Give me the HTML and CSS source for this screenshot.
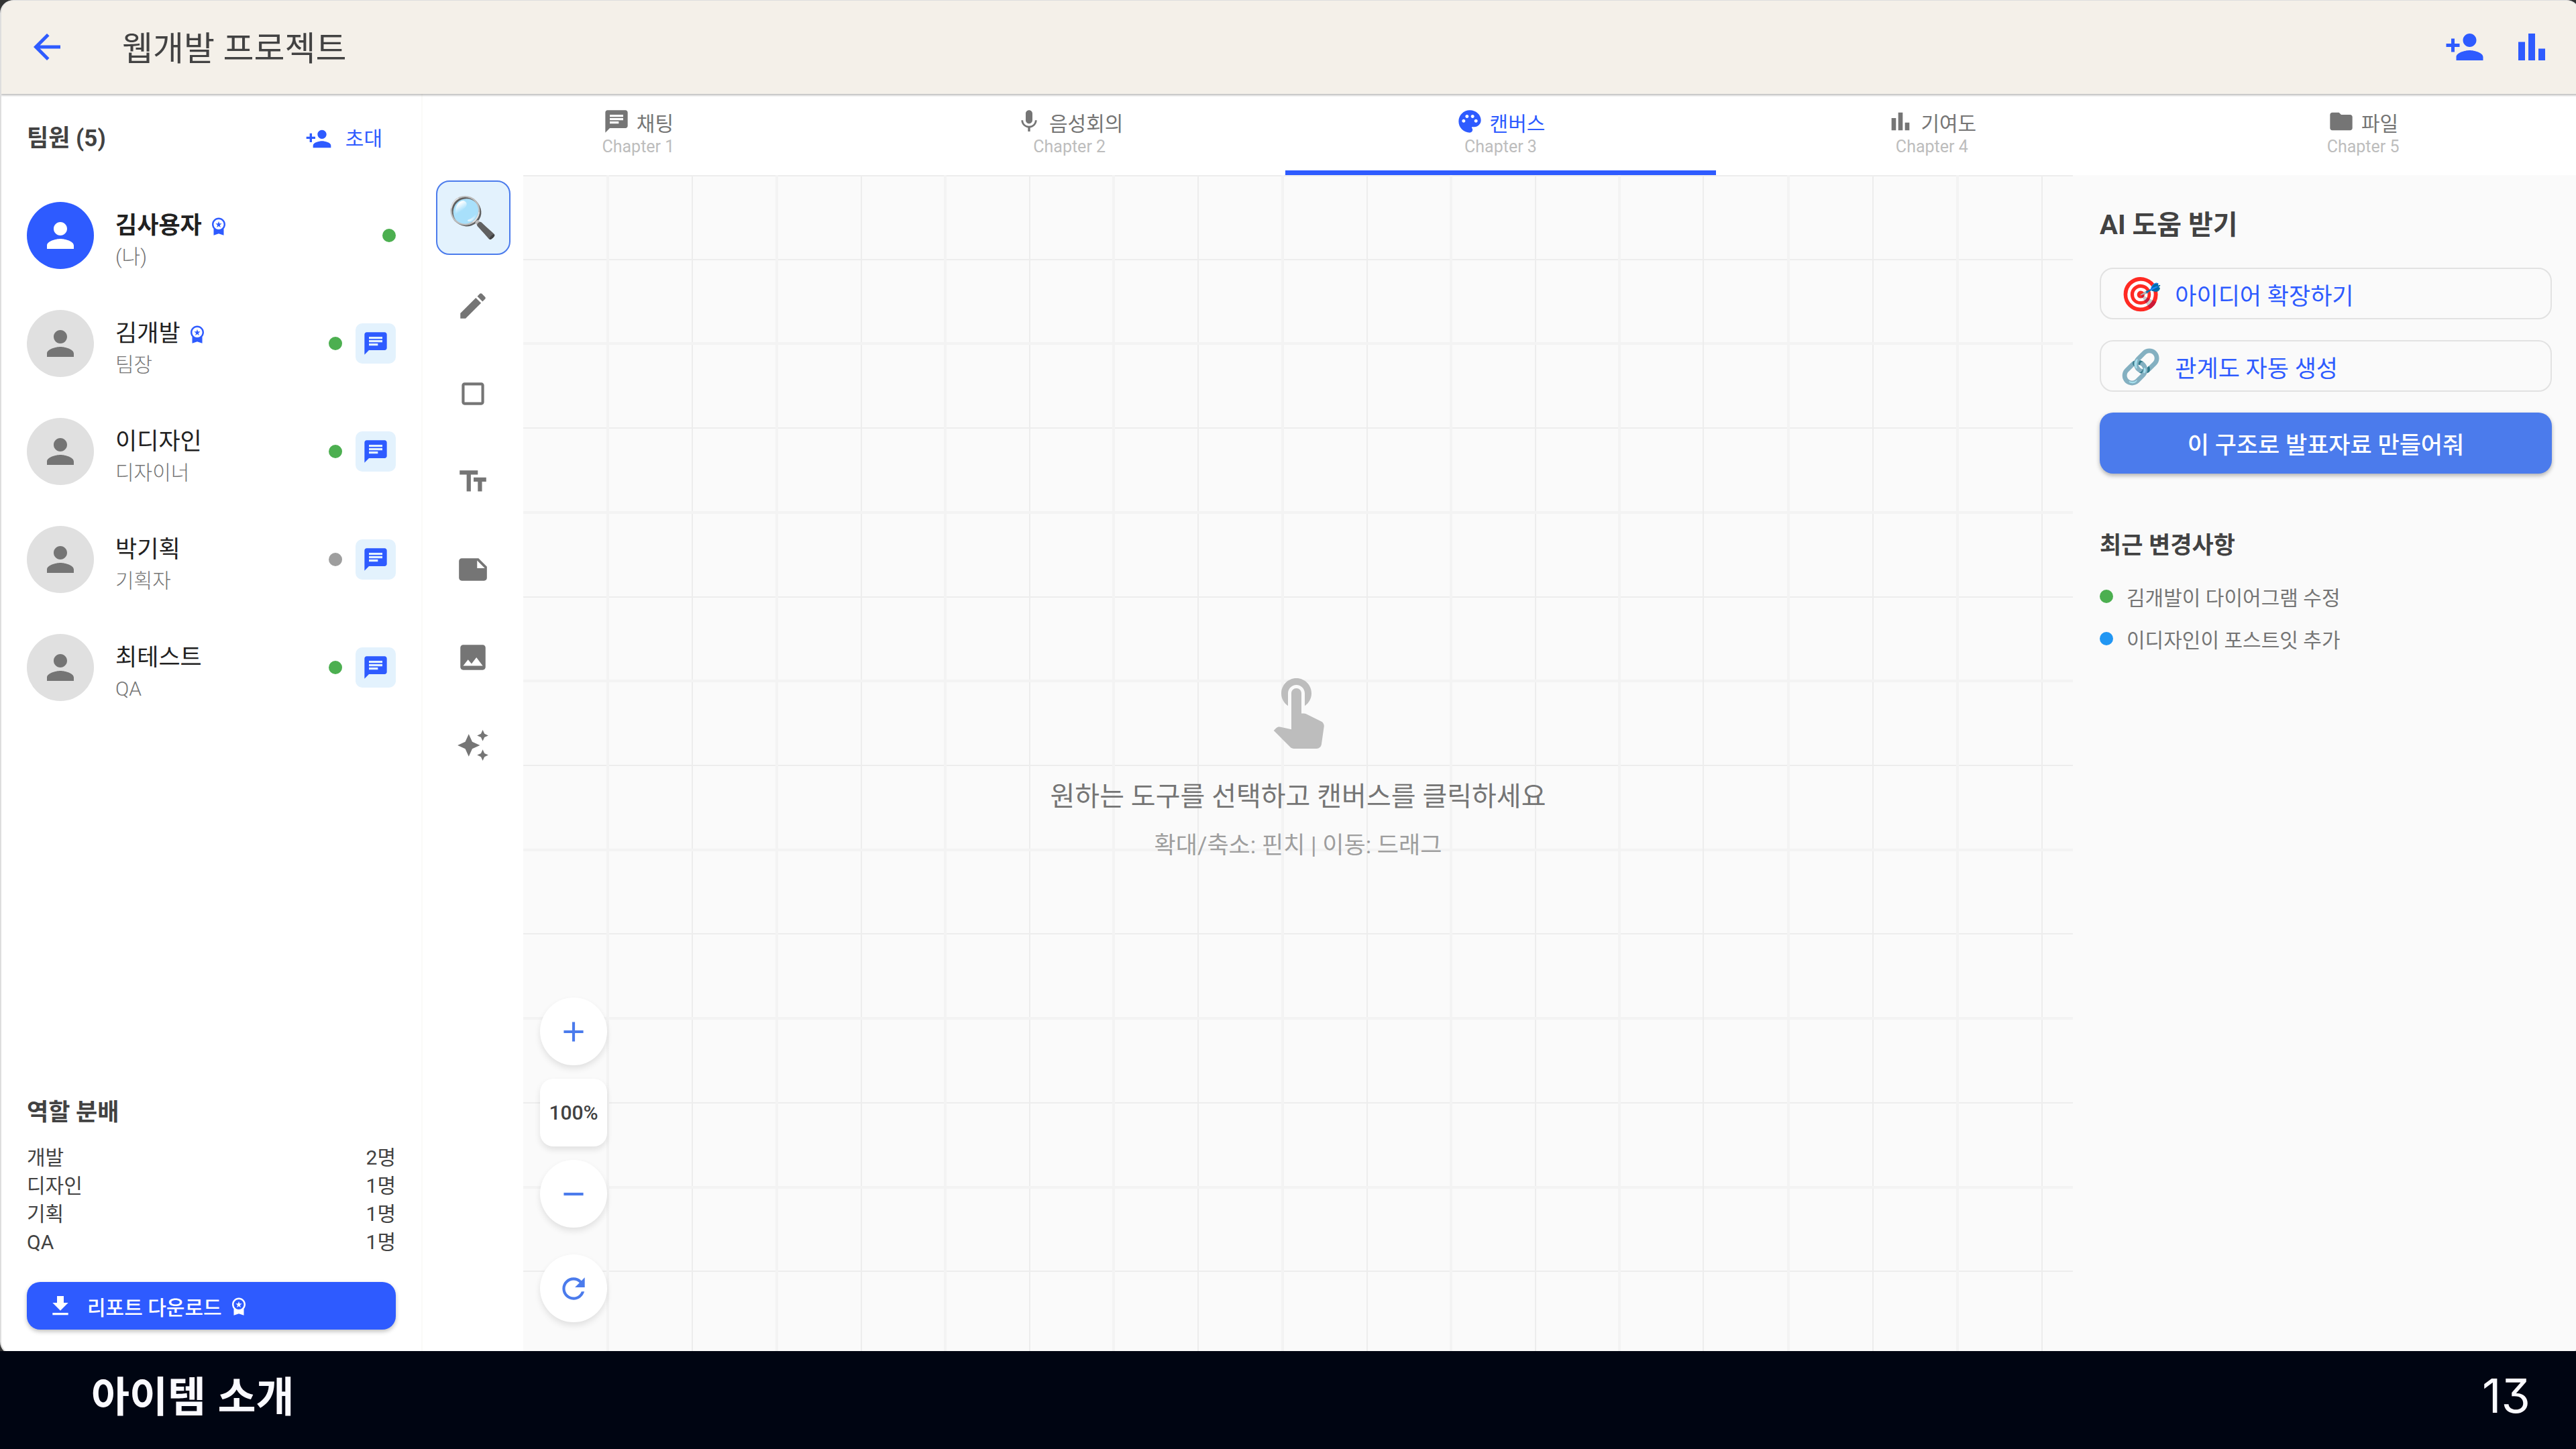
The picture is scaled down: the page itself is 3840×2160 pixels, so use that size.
FILE: index.html
```html
<!DOCTYPE html>
<html lang="ko">
<head>
<meta charset="utf-8">
<meta name="viewport" content="width=device-width, initial-scale=1">
<title>웹개발 프로젝트</title>
<link rel="stylesheet" href="styles.css">
</head>
<body>
<svg class="sprite" aria-hidden="true">
  <symbol id="i-back" viewBox="0 0 24 24"><path d="M20 11H7.83l5.59-5.59L12 4l-8 8 8 8 1.41-1.41L7.83 13H20v-2z"/></symbol>
  <symbol id="i-person" viewBox="0 0 24 24"><path d="M12 12c2.21 0 4-1.79 4-4s-1.79-4-4-4-4 1.79-4 4 1.79 4 4 4zm0 2c-2.67 0-8 1.34-8 4v2h16v-2c0-2.66-5.33-4-8-4z"/></symbol>
  <symbol id="i-person-add" viewBox="0 0 24 24"><path d="M15 12c2.21 0 4-1.79 4-4s-1.79-4-4-4-4 1.79-4 4 1.79 4 4 4zm-9-2V7H4v3H1v2h3v3h2v-3h3v-2H6zm9 4c-2.67 0-8 1.34-8 4v2h16v-2c0-2.66-5.33-4-8-4z"/></symbol>
  <symbol id="i-bars" viewBox="0 0 24 24"><path d="M4 9h4v11H4zM16 13h4v7h-4zM10 4h4v16h-4z"/></symbol>
  <symbol id="i-badge" viewBox="0 0 24 24"><path d="M9.68 13.69 12 11.93l2.31 1.76-.88-2.85L15.75 9h-2.84L12 6.19 11.09 9H8.25l2.31 1.84-.88 2.85zM20 10c0-4.42-3.58-8-8-8s-8 3.58-8 8c0 2.03.76 3.87 2 5.28V23l6-2 6 2v-7.72c1.24-1.41 2-3.25 2-5.28zm-8-6c3.31 0 6 2.69 6 6s-2.69 6-6 6-6-2.69-6-6 2.69-6 6-6z"/></symbol>
  <symbol id="i-chat" viewBox="0 0 24 24"><path d="M20 2H4c-1.1 0-1.99.9-1.99 2L2 22l4-4h14c1.1 0 2-.9 2-2V4c0-1.1-.9-2-2-2zM6 9h12v2H6V9zm8 5H6v-2h8v2zm4-6H6V6h12v2z"/></symbol>
  <symbol id="i-mic" viewBox="0 0 24 24"><path d="M12 14c1.66 0 2.99-1.34 2.99-3L15 5c0-1.66-1.34-3-3-3S9 3.34 9 5v6c0 1.66 1.34 3 3 3zm5.3-3c0 3-2.54 5.1-5.3 5.1S6.7 14 6.7 11H5c0 3.41 2.72 6.23 6 6.72V21h2v-3.28c3.28-.48 6-3.3 6-6.72h-1.7z"/></symbol>
  <symbol id="i-palette" viewBox="0 0 24 24"><path d="M12 2C6.49 2 2 6.49 2 12s4.49 10 10 10c1.38 0 2.5-1.12 2.5-2.5 0-.61-.23-1.2-.64-1.67-.08-.1-.13-.21-.13-.33 0-.28.22-.5.5-.5H16c3.31 0 6-2.69 6-6 0-4.96-4.49-9-10-9zm5.5 11c-.83 0-1.5-.67-1.5-1.5s.67-1.5 1.5-1.5 1.5.67 1.5 1.5-.67 1.5-1.5 1.5zm-3-4c-.83 0-1.5-.67-1.5-1.5S13.67 6 14.5 6s1.5.67 1.5 1.5S15.33 9 14.5 9zM5 11.5c0-.83.67-1.5 1.5-1.5s1.5.67 1.5 1.5S7.33 13 6.5 13 5 12.33 5 11.5zm6-4c0 .83-.67 1.5-1.5 1.5S8 8.33 8 7.5 8.67 6 9.5 6s1.5.67 1.5 1.5z"/></symbol>
  <symbol id="i-folder" viewBox="0 0 24 24"><path d="M10 4H4c-1.1 0-1.99.9-1.99 2L2 18c0 1.1.9 2 2 2h16c1.1 0 2-.9 2-2V8c0-1.1-.9-2-2-2h-8l-2-2z"/></symbol>
  <symbol id="i-edit" viewBox="0 0 24 24"><path d="M3 17.25V21h3.75L17.81 9.94l-3.75-3.75L3 17.25zM20.71 7.04c.39-.39.39-1.02 0-1.41l-2.34-2.34c-.39-.39-1.02-.39-1.41 0l-1.83 1.83 3.75 3.75 1.83-1.83z"/></symbol>
  <symbol id="i-square" viewBox="0 0 24 24"><path d="M18 4H6c-1.1 0-2 .9-2 2v12c0 1.1.9 2 2 2h12c1.1 0 2-.9 2-2V6c0-1.1-.9-2-2-2zm0 14H6V6h12v12z"/></symbol>
  <symbol id="i-text" viewBox="0 0 24 24"><path d="M2.5 4v3h5v12h3V7h5V4h-13zm19 5h-9v3h3v7h3v-7h3V9z"/></symbol>
  <symbol id="i-note" viewBox="0 0 24 24"><path d="M22 10l-6-6H4c-1.1 0-2 .9-2 2v12.01c0 1.1.9 1.99 2 1.99l16-.01c1.1 0 2-.89 2-2v-8zm-7-4.5l5.5 5.5H15V5.5z"/></symbol>
  <symbol id="i-image" viewBox="0 0 24 24"><path d="M21 19V5c0-1.1-.9-2-2-2H5c-1.1 0-2 .9-2 2v14c0 1.1.9 2 2 2h14c1.1 0 2-.9 2-2zM8.5 13.5l2.5 3.01L14.5 12l4.5 6H5l3.5-4.5z"/></symbol>
  <symbol id="i-sparkle" viewBox="0 0 24 24"><path d="M19 9l1.25-2.75L23 5l-2.75-1.25L19 1l-1.25 2.75L15 5l2.75 1.25L19 9zm-7.5.5L9 4 6.5 9.5 1 12l5.5 2.5L9 20l2.5-5.5L17 12l-5.5-2.5zM19 15l-1.25 2.75L15 19l2.75 1.25L19 23l1.25-2.75L23 19l-2.75-1.25L19 15z"/></symbol>
  <symbol id="i-touch" viewBox="0 0 24 24"><path d="M9 11.24V7.5C9 6.12 10.12 5 11.5 5S14 6.12 14 7.5v3.74c1.21-.81 2-2.18 2-3.74C16 5.01 13.99 3 11.5 3S7 5.01 7 7.5c0 1.56.79 2.93 2 3.74zm9.84 4.63l-4.54-2.26c-.17-.07-.35-.11-.54-.11H13v-6c0-.83-.67-1.5-1.5-1.5S10 6.67 10 7.5v10.74l-3.43-.72c-.08-.01-.15-.03-.24-.03-.31 0-.59.13-.79.33l-.79.8 4.94 4.94c.27.27.65.44 1.06.44h6.79c.75 0 1.33-.55 1.44-1.28l.75-5.27c.01-.07.02-.14.02-.2 0-.62-.38-1.16-.91-1.38z"/></symbol>
  <symbol id="i-plus" viewBox="0 0 24 24"><path d="M19 13h-6v6h-2v-6H5v-2h6V5h2v6h6v2z"/></symbol>
  <symbol id="i-minus" viewBox="0 0 24 24"><path d="M19 13H5v-2h14v2z"/></symbol>
  <symbol id="i-refresh" viewBox="0 0 24 24"><path d="M17.65 6.35C16.2 4.9 14.21 4 12 4c-4.42 0-7.99 3.58-7.99 8s3.57 8 7.99 8c3.73 0 6.84-2.55 7.73-6h-2.08c-.82 2.33-3.04 4-5.65 4-3.31 0-6-2.69-6-6s2.69-6 6-6c1.66 0 3.14.69 4.22 1.78L13 11h7V4l-2.35 2.35z"/></symbol>
  <symbol id="i-download" viewBox="0 0 24 24"><path d="M19 9h-4V3H9v6H5l7 7 7-7zM5 18v2h14v-2H5z"/></symbol>
</svg>

<div class="stage">
  <div class="app">
    <header class="appbar">
      <button class="icon-btn" aria-label="뒤로"><svg class="icon icon-60"><use href="#i-back"/></svg></button>
      <h1 class="appbar-title">웹개발 프로젝트</h1>
      <div class="appbar-actions">
        <button class="icon-btn" aria-label="팀원 초대"><svg class="icon icon-60"><use href="#i-person-add"/></svg></button>
        <button class="icon-btn" aria-label="통계"><svg class="icon icon-60"><use href="#i-bars"/></svg></button>
      </div>
    </header>

    <div class="workspace">
      <aside class="sidebar">
        <div class="team-head">
          <h2 class="section-title">팀원 (5)</h2>
          <button class="invite"><svg class="icon icon-40"><use href="#i-person-add"/></svg>초대</button>
        </div>
        <ul class="members">
          <li class="member">
            <span class="avatar avatar-me"><svg class="icon icon-60"><use href="#i-person"/></svg></span>
            <div class="who"><div class="name name-me">김사용자<svg class="icon icon-30"><use href="#i-badge"/></svg></div><div class="role">(나)</div></div>
            <span class="dot dot-green"></span>
          </li>
          <li class="member">
            <span class="avatar"><svg class="icon icon-60"><use href="#i-person"/></svg></span>
            <div class="who"><div class="name">김개발<svg class="icon icon-30"><use href="#i-badge"/></svg></div><div class="role">팀장</div></div>
            <span class="dot dot-green"></span>
            <button class="dm" aria-label="김개발에게 메시지"><svg class="icon icon-40"><use href="#i-chat"/></svg></button>
          </li>
          <li class="member">
            <span class="avatar"><svg class="icon icon-60"><use href="#i-person"/></svg></span>
            <div class="who"><div class="name">이디자인</div><div class="role">디자이너</div></div>
            <span class="dot dot-green"></span>
            <button class="dm" aria-label="이디자인에게 메시지"><svg class="icon icon-40"><use href="#i-chat"/></svg></button>
          </li>
          <li class="member">
            <span class="avatar"><svg class="icon icon-60"><use href="#i-person"/></svg></span>
            <div class="who"><div class="name">박기획</div><div class="role">기획자</div></div>
            <span class="dot dot-gray"></span>
            <button class="dm" aria-label="박기획에게 메시지"><svg class="icon icon-40"><use href="#i-chat"/></svg></button>
          </li>
          <li class="member">
            <span class="avatar"><svg class="icon icon-60"><use href="#i-person"/></svg></span>
            <div class="who"><div class="name">최테스트</div><div class="role">QA</div></div>
            <span class="dot dot-green"></span>
            <button class="dm" aria-label="최테스트에게 메시지"><svg class="icon icon-40"><use href="#i-chat"/></svg></button>
          </li>
        </ul>
        <div class="roles">
          <h2 class="section-title">역할 분배</h2>
          <table class="role-table">
            <tr><th scope="row">개발</th><td>2명</td></tr>
            <tr><th scope="row">디자인</th><td>1명</td></tr>
            <tr><th scope="row">기획</th><td>1명</td></tr>
            <tr><th scope="row">QA</th><td>1명</td></tr>
          </table>
          <button class="download"><svg class="icon icon-40"><use href="#i-download"/></svg><span class="download-label">리포트 다운로드<svg class="icon icon-30"><use href="#i-badge"/></svg></span></button>
        </div>
      </aside>

      <main class="main">
        <nav class="tabs">
          <a class="tab" href="#chat"><span class="tab-label"><svg class="icon icon-40"><use href="#i-chat"/></svg><span class="tab-name">채팅</span></span><span class="tab-sub">Chapter 1</span></a>
          <a class="tab" href="#voice"><span class="tab-label"><svg class="icon icon-40"><use href="#i-mic"/></svg><span class="tab-name">음성회의</span></span><span class="tab-sub">Chapter 2</span></a>
          <a class="tab tab-active" href="#canvas" aria-current="page"><span class="tab-label"><svg class="icon icon-40"><use href="#i-palette"/></svg><span class="tab-name">캔버스</span></span><span class="tab-sub">Chapter 3</span></a>
          <a class="tab" href="#stats"><span class="tab-label"><svg class="icon icon-40"><use href="#i-bars"/></svg><span class="tab-name">기여도</span></span><span class="tab-sub">Chapter 4</span></a>
          <a class="tab" href="#files"><span class="tab-label"><svg class="icon icon-40"><use href="#i-folder"/></svg><span class="tab-name">파일</span></span><span class="tab-sub">Chapter 5</span></a>
        </nav>

        <div class="board">
          <div class="tools">
            <button class="tool tool-active" aria-label="선택"><span class="emoji-60">🔍</span></button>
            <button class="tool" aria-label="펜"><svg class="icon icon-50"><use href="#i-edit"/></svg></button>
            <button class="tool" aria-label="도형"><svg class="icon icon-50"><use href="#i-square"/></svg></button>
            <button class="tool" aria-label="텍스트"><svg class="icon icon-50"><use href="#i-text"/></svg></button>
            <button class="tool" aria-label="메모"><svg class="icon icon-50"><use href="#i-note"/></svg></button>
            <button class="tool" aria-label="이미지"><svg class="icon icon-50"><use href="#i-image"/></svg></button>
            <button class="tool" aria-label="AI"><svg class="icon icon-50"><use href="#i-sparkle"/></svg></button>
          </div>

          <section class="canvas" id="canvas">
            <svg class="grid-lines" aria-hidden="true">
              <defs>
                <pattern id="grid" width="1760" height="1760" patternUnits="userSpaceOnUse">
                  <path stroke="#ededed" stroke-width="2" d="M252 0v1760M504 0v1760M755 0v1760M1006 0v1760M1258 0v1760M1509 0v1760M0 1h1760M0 126h1760M0 377h1760M0 629h1760M0 880h1760M0 1131h1760M0 1383h1760M0 1634h1760"/>
                  <path stroke="#f3f3f3" stroke-width="4" d="M126 0v1760M378 0v1760M629 0v1760M880 0v1760M1132 0v1760M1383 0v1760M1634 0v1760M0 251h1760M0 503h1760M0 754h1760M0 1006h1760M0 1257h1760M0 1509h1760"/>
                  <path stroke="#ededed" stroke-width="2" d="M1759 0v1760"/>
                </pattern>
              </defs>
              <rect width="100%" height="100%" fill="url(#grid)"/>
            </svg>
            <div class="hint">
              <svg class="icon icon-120"><use href="#i-touch"/></svg>
              <p class="hint-main">원하는 도구를 선택하고 캔버스를 클릭하세요</p>
              <p class="hint-sub">확대/축소: 핀치 | 이동: 드래그</p>
            </div>
            <div class="zoom">
              <button class="zoom-btn" aria-label="확대"><svg class="icon icon-50"><use href="#i-plus"/></svg></button>
              <output class="zoom-value">100%</output>
              <button class="zoom-btn" aria-label="축소"><svg class="icon icon-50"><use href="#i-minus"/></svg></button>
              <button class="zoom-btn zoom-reset" aria-label="초기화"><svg class="icon icon-50"><use href="#i-refresh"/></svg></button>
            </div>
          </section>

          <aside class="panel">
            <h2 class="panel-title">AI 도움 받기</h2>
            <button class="ai-btn"><span class="emoji-50">🎯</span>아이디어 확장하기</button>
            <button class="ai-btn"><span class="emoji-50">🔗</span>관계도 자동 생성</button>
            <button class="ai-primary">이 구조로 발표자료 만들어줘</button>
            <h3 class="section-title recent-title">최근 변경사항</h3>
            <ul class="recent">
              <li><span class="dot dot-green"></span>김개발이 다이어그램 수정</li>
              <li><span class="dot dot-blue"></span>이디자인이 포스트잇 추가</li>
            </ul>
          </aside>
        </div>
      </main>
    </div>
  </div>
</div>
<footer class="caption">
  <p class="caption-title">아이템 소개</p>
  <p class="caption-page">13</p>
</footer>
</body>
</html>
```
FILE: styles.css
```css
:root {
  --blue: #2e5bff;
  --canvas-blue: #4b7bec;
  --ink: #424242;
  --muted: #757575;
  --tint: #e3f2fd;
}
* { box-sizing: border-box; }
body {
  margin: 0;
  min-height: 100vh;
  display: flex;
  flex-direction: column;
  background: #000512;
  color: var(--ink);
  font-family: Roboto, "Noto Sans CJK KR", sans-serif;
  font-size: 30px;
}
h1, h2, h3, p, ul { margin: 0; padding: 0; }
ul { list-style: none; }
button {
  border: 0;
  padding: 0;
  background: none;
  color: inherit;
  font: inherit;
  display: flex;
  align-items: center;
  justify-content: center;
}
a { color: inherit; text-decoration: none; }
.sprite { position: absolute; width: 0; height: 0; }
.icon { display: block; flex: none; fill: currentColor; }
.icon-30 { width: 30px; height: 30px; }
.icon-40 { width: 40px; height: 40px; }
.icon-50 { width: 50px; height: 50px; }
.icon-60 { width: 60px; height: 60px; }
.icon-120 { width: 120px; height: 120px; }
.emoji-50, .emoji-60 { font-family: "Noto Color Emoji", sans-serif; font-weight: 400; }
.emoji-50 { font-size: 50px; line-height: 60px; }
.emoji-60 { font-size: 60px; line-height: 70px; }

/* window frame: runs slightly past the right and bottom edges */
.stage { flex: 1; display: flex; overflow: hidden; background: #333; }
.app {
  flex: 1;
  display: flex;
  flex-direction: column;
  margin: 0 -6px -6px 0;
  border: 2px solid #dedede;
  border-top-width: 1px;
  border-radius: 20px;
  overflow: hidden;
  background: #fff;
}

.appbar {
  position: relative;
  z-index: 1;
  display: flex;
  align-items: center;
  height: 139px;
  padding: 0 40px 2px 38px;
  background: #f4f0e9;
  box-shadow: 0 1px 3px 1px rgba(0, 0, 0, .28);
  color: var(--blue);
}
.appbar-title { margin-left: 82px; color: var(--ink); font-size: 50px; font-weight: 400; line-height: 60px; padding-top: 6px; }
.appbar-actions { display: flex; gap: 40px; margin-left: auto; }

.workspace { flex: 1; display: flex; }
.sidebar {
  flex: none;
  width: 628px;
  display: flex;
  flex-direction: column;
  padding: 37px 38px 36px;
  border-right: 2px solid #fafaf8;
}
.section-title { font-size: 35px; font-weight: 700; line-height: 60px; }
.team-head { display: flex; align-items: center; justify-content: space-between; }
.invite { gap: 20px; padding: 0 20px; color: var(--blue); line-height: 60px; }
.members { display: flex; flex-direction: column; gap: 61px; padding-top: 64px; }
.member { display: flex; align-items: center; height: 100px; }
.avatar {
  display: grid;
  place-items: center;
  width: 100px;
  height: 100px;
  border-radius: 50%;
  background: #e0e0e0;
  color: var(--muted);
}
.avatar-me { background: var(--blue); color: #fff; }
.who { flex: 1; padding: 18px 0 0 32px; }
.name { display: flex; align-items: center; gap: 10px; color: #212121; font-size: 35px; line-height: 46px; }
.name .icon { color: var(--blue); }
.name-me { font-weight: 700; }
.role { color: var(--muted); line-height: 46px; font-weight: 300; }
.dot { flex: none; width: 20px; height: 20px; border-radius: 50%; }
.dot-green { background: #4caf50; }
.dot-gray { background: #9e9e9e; }
.dot-blue { background: #2196f3; }
.dm { width: 60px; height: 60px; margin-left: 20px; border-radius: 10px; background: var(--tint); color: var(--blue); }

.roles { margin-top: auto; }
.role-table { width: 100%; margin: 16px 0 38px; border-collapse: collapse; line-height: 42px; }
.role-table th, .role-table td { padding: 0; font-weight: 400; text-align: left; }
.role-table td { text-align: right; }
.download {
  width: 100%;
  height: 71px;
  justify-content: flex-start;
  gap: 20px;
  padding: 0 30px;
  border-radius: 20px;
  background: var(--blue);
  color: #fff;
  font-weight: 500;
  box-shadow: 0 3px 6px rgba(0, 0, 0, .25);
}
.download-label { display: flex; align-items: center; gap: 10px; }

.main { flex: 1; display: flex; flex-direction: column; min-width: 0; }
.tabs { display: grid; grid-template-columns: repeat(5, 1fr); height: 121px; }
.tab { display: flex; flex-direction: column; align-items: center; padding-top: 21px; border-bottom: 7px solid transparent; color: var(--muted); }
.tab-active { border-bottom-color: var(--blue); color: var(--blue); }
.tab-label { display: flex; align-items: flex-start; gap: 10px; }
.tab-name { padding-top: 4px; line-height: 40px; }
.tab-sub { color: #bdbdbd; font-size: 25px; line-height: 28px; }

.board { flex: 1; display: flex; background: #fafafa; }
.tools { flex: none; width: 150px; display: flex; flex-direction: column; align-items: center; gap: 20px; padding-top: 8px; background: #fff; color: var(--muted); }
.tool { width: 111px; height: 111px; border-radius: 20px; }
.tool-active { border: 2px solid var(--canvas-blue); background: var(--tint); }

.canvas { position: relative; flex: 1; display: flex; align-items: center; justify-content: center; }
.grid-lines { position: absolute; inset: 0; width: 100%; height: 100%; }
.hint { position: relative; display: flex; flex-direction: column; align-items: center; text-align: center; color: #bdbdbd; }
.hint-main { margin: 42px 0 20px; color: var(--muted); font-size: 40px; line-height: 60px; }
.hint-sub { color: #9e9e9e; font-size: 35px; line-height: 46px; }
.zoom { position: absolute; left: 25px; bottom: 47px; display: flex; flex-direction: column; gap: 20px; }
.zoom-btn, .zoom-value {
  width: 100px;
  height: 101px;
  border-radius: 50%;
  background: #fff;
  color: var(--canvas-blue);
  box-shadow: 0 5px 10px rgba(0, 0, 0, .1);
}
.zoom-value { display: grid; place-items: center; border-radius: 20px; color: var(--ink); font-weight: 500; }
.zoom-reset { margin-top: 20px; }

.panel { flex: none; width: 754px; padding: 45px 40px 40px; }
.panel-title { margin-bottom: 33px; font-size: 40px; font-weight: 700; line-height: 60px; }
.ai-btn {
  width: 100%;
  height: 77px;
  justify-content: flex-start;
  gap: 20px;
  margin-bottom: 31px;
  padding: 2px 28px 0;
  border: 2px solid #e2e2e2;
  border-radius: 20px;
  color: var(--blue);
  font-size: 35px;
}
.ai-primary {
  width: 100%;
  height: 91px;
  border-radius: 20px;
  background: var(--canvas-blue);
  color: #fff;
  font-size: 35px;
  font-weight: 500;
  box-shadow: 0 3px 6px rgba(0, 0, 0, .3);
}
.recent-title { margin: 78px 0 13px; }
.recent li { display: flex; align-items: center; gap: 20px; height: 63px; color: var(--muted); }

.caption {
  display: flex;
  align-items: center;
  justify-content: space-between;
  height: 146px;
  padding: 0 68px 18px 136px;
  color: #fafaff;
}
.caption-title { font-family: "Noto Sans CJK KR", sans-serif; font-size: 62px; font-weight: 700; line-height: 80px; }
.caption-page { padding-top: 6px; font-family: Inter, sans-serif; font-size: 70px; line-height: 80px; font-feature-settings: "cv09"; }
```
